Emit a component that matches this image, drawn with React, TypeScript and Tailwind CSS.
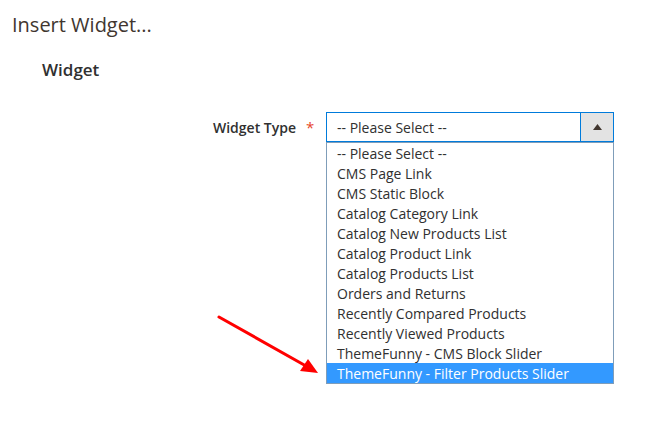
import React from "react";

const options = [
  "-- Please Select --",
  "CMS Page Link",
  "CMS Static Block",
  "Catalog Category Link",
  "Catalog New Products List",
  "Catalog Product Link",
  "Catalog Products List",
  "Orders and Returns",
  "Recently Compared Products",
  "Recently Viewed Products",
  "ThemeFunny - CMS Block Slider",
  "ThemeFunny - Filter Products Slider",
];

export default function App() {
  return (
    <div className="relative w-[660px] h-[430px] bg-white font-['Open_Sans',sans-serif] text-[#303030]">
      <h1 className="pl-[12px] pt-[11px] text-[20px] leading-[28px] text-[#41362f] font-normal">
        Insert Widget...
      </h1>
      <h2 className="pl-[42px] mt-[19px] text-[17px] leading-[24px] font-semibold text-[#303030]">
        Widget
      </h2>
      <div className="flex mt-[30px]">
        <div className="w-[296px] h-[30px] flex items-center justify-end text-[14px] font-semibold text-[#303030]">
          Widget Type
        </div>
        <div className="w-[30px] h-[30px] flex items-center pl-[10px] text-[15px] text-[#e6462a]">
          *
        </div>
        <div className="w-[288px] flex flex-col">
          <div className="h-[30px] flex border border-[#007bdb] bg-white">
            <div className="flex-1 flex items-center pl-[10px] text-[14px] text-[#303030]">
              -- Please Select --
            </div>
            <div className="w-[33px] flex items-center justify-center bg-[#e3e3e3] border-l border-[#007bdb]">
              <svg width="9" height="6" viewBox="0 0 9 6">
                <polygon points="4.5,0 9,6 0,6" fill="#41362f" />
              </svg>
            </div>
          </div>
          <div className="border border-[#7f9db9] bg-white">
            {options.map((o, i) => (
              <div
                key={o}
                className={
                  i === options.length - 1
                    ? "h-[20px] flex items-center pl-[10px] text-[14px] bg-[#3399ff] text-white"
                    : "h-[20px] flex items-center pl-[10px] text-[14px] text-[#303030]"
                }
              >
                {o}
              </div>
            ))}
          </div>
        </div>
      </div>
      <svg
        className="absolute left-0 top-0 pointer-events-none"
        width="660"
        height="430"
        viewBox="0 0 660 430"
      >
        <line x1="219" y1="317" x2="306" y2="366" stroke="#ff0000" strokeWidth="3" strokeLinecap="round" />
        <polygon points="318,373 300,371 308,359" fill="#ff0000" />
      </svg>
    </div>
  );
}
